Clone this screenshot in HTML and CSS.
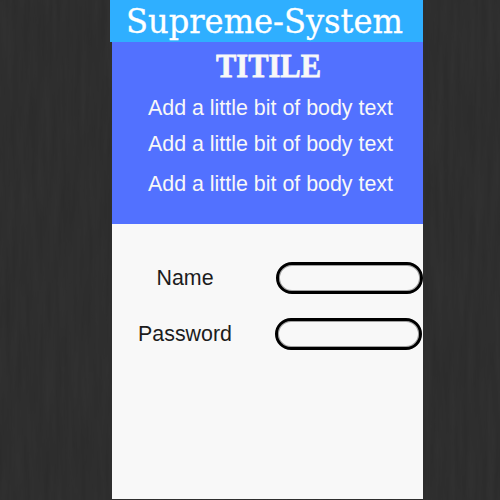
FILE: index.html
```
<!DOCTYPE html>
<html lang="en">
<head>
<meta charset="utf-8">
<title>Supreme-System</title>
<link rel="stylesheet" href="styles.css">
</head>
<body>
<svg class="grain" aria-hidden="true">
  <filter id="wood" x="0" y="0" width="100%" height="100%" color-interpolation-filters="sRGB">
    <feTurbulence type="fractalNoise" baseFrequency="0.16 0.012" numOctaves="4" seed="8"/>
    <feColorMatrix values="0.03 0 0 0 0.165  0.03 0 0 0 0.165  0.03 0 0 0 0.165  0 0 0 0 1"/>
  </filter>
  <rect width="100%" height="100%" filter="url(#wood)"/>
</svg>
<main class="page">
  <header class="brand">
    <svg class="brand-name" viewBox="0 0 313 42"><text x="16" y="33" textLength="277" lengthAdjust="spacingAndGlyphs">Supreme-System</text></svg>
  </header>
  <section class="intro">
    <h1 class="title"><svg class="title-name" viewBox="0 0 311 50"><text x="104" y="35" textLength="105" lengthAdjust="spacingAndGlyphs">TITILE</text></svg></h1>
    <p class="line">Add a little bit of body text</p>
    <p class="line">Add a little bit of body text</p>
    <p class="line line-last">Add a little bit of body text</p>
  </section>
  <form class="login">
    <div class="field">
      <label class="label" for="name">Name</label>
      <input class="box" id="name" type="text">
    </div>
    <div class="field field-password">
      <label class="label" for="password">Password</label>
      <input class="box" id="password" type="password">
    </div>
  </form>
</main>
</body>
</html>
```
FILE: styles.css
```
* { box-sizing: border-box; }
body {
  margin: 0;
  height: 500px;
  overflow: hidden;
  background: #2e2e2e;
  font-family: "Liberation Sans", Arial, sans-serif;
  font-size: 21.4px;
}
.grain {
  position: absolute;
  inset: 0;
  width: 100%;
  height: 100%;
}
.page {
  position: relative;
  display: flex;
  flex-direction: column;
  width: 311px;
  height: 499px;
  margin-left: 112px;
  background: #f8f8f8;
}
.brand {
  flex: none;
  width: 313px;
  height: 42px;
  margin-left: -2px;
  background: #2fafff;
}
.brand-name, .title-name { display: block; width: 100%; height: 100%; }
.brand-name {
  fill: #fff;
  stroke: #fff;
  stroke-width: 0.3px;
  font: 33px "DejaVu Serif", serif;
}
.intro {
  flex: none;
  height: 182px;
  background: #5271ff;
  color: #f8f8f8;
}
.title { height: 50px; margin: 0; }
.title-name {
  fill: #f8f8f8;
  stroke: #f8f8f8;
  stroke-width: 0.8px;
  font: bold 34px "Liberation Serif", serif;
}
.line {
  height: 36px;
  margin: 0;
  padding-left: 6px;
  line-height: 32px;
  text-align: center;
  white-space: nowrap;
}
.line-last { margin-top: 4px; }
.login { padding-top: 38px; }
.field {
  display: flex;
  align-items: center;
  height: 32px;
  padding-left: 18px;
}
.label {
  width: 110px;
  text-align: center;
  color: #1c1c1c;
}
.box {
  width: 147px;
  height: 32px;
  margin-left: 36px;
  padding: 0 12px;
  border: 3px solid #000;
  border-radius: 16px;
  background: transparent;
  box-shadow: inset 0 0 0 1px rgba(0, 0, 0, 0.35);
  font: inherit;
  outline: none;
}
.field-password { margin-top: 24px; }
.field-password .box { margin-left: 35px; }
```
